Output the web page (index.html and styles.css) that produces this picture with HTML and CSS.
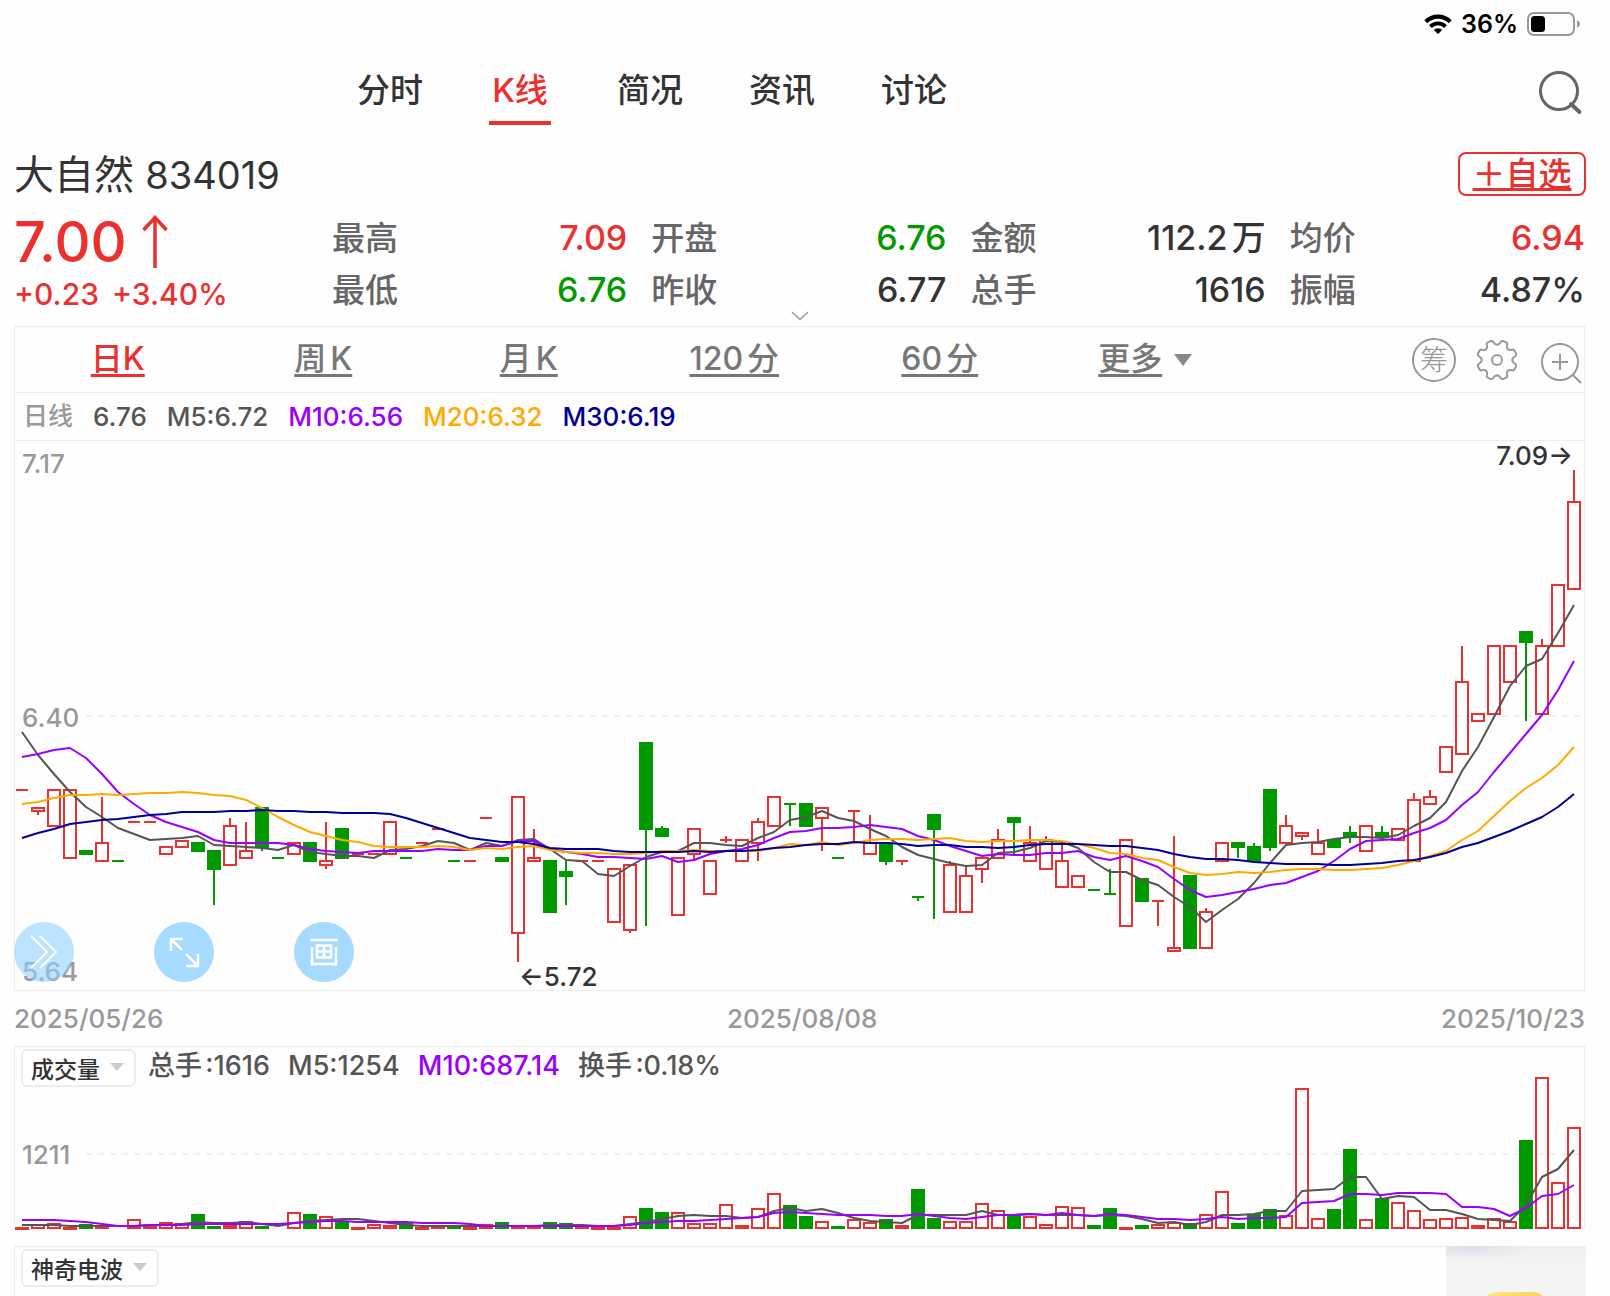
FILE: index.html
```
<!DOCTYPE html>
<html lang="zh-CN">
<head>
    <meta charset="UTF-8">
    <meta name="viewport" content="width=device-width, initial-scale=1.0">
    <title>大自然 834019</title>
    <link rel="stylesheet" href="styles.css">
</head>
<body>
    <div class="status-bar">
        <svg class="wifi" width="28" height="20" viewBox="0 0 28 20" aria-hidden="true">
            <path d="M1.800 7.800 A17 17 0 0 1 26.200 7.800" fill="none" stroke="#000" stroke-width="4.200"/>
            <path d="M6.500 12.600 A10.400 10.400 0 0 1 21.500 12.600" fill="none" stroke="#000" stroke-width="3.800"/>
            <path d="M9.800 16 A6 6 0 0 1 18.200 16 L14 20 Z" fill="#000"/>
        </svg>
        <span>36%</span>
        <svg class="battery" width="54" height="24" viewBox="0 0 54 24" aria-hidden="true">
            <rect x="1" y="1" width="46" height="22" rx="6" fill="none" stroke="#999" stroke-width="2"/>
            <rect x="4" y="4" width="14" height="16" rx="3.500" fill="#000"/>
            <path d="M50 8 Q53 9.500 53 12 Q53 14.500 50 16 Z" fill="#999"/>
        </svg>
    </div>

    <header class="top-nav">
        <nav class="tabs">
            <a href="#">分时</a>
            <a href="#" class="active">K线</a>
            <a href="#">简况</a>
            <a href="#">资讯</a>
            <a href="#">讨论</a>
        </nav>
        <button class="icon-btn search" aria-label="搜索">
            <svg width="46" height="46" viewBox="0 0 46 46">
                <circle cx="21" cy="21" r="18.500" fill="none" stroke="#666" stroke-width="3"/>
                <path d="M33 34 L41.500 42" stroke="#666" stroke-width="4" stroke-linecap="round"/>
            </svg>
        </button>
    </header>

    <div class="title-row">
        <h1>大自然 <span>834019</span></h1>
        <button class="add-btn">＋自选</button>
    </div>

    <section class="quote">
        <div class="price">
            <div class="last">7.00
                <svg width="28" height="54" viewBox="0 0 28 54"><path d="M14 53 V3 M2.500 15 L14 2.500 L25.500 15" fill="none" stroke="#eb3030" stroke-width="3.500"/></svg>
            </div>
            <div class="change"><span>+0.23</span><span>+3.40%</span></div>
        </div>
        <dl class="stats">
            <div><dt>最高</dt><dd class="up">7.09</dd></div>
            <div><dt>开盘</dt><dd class="down">6.76</dd></div>
            <div><dt>金额</dt><dd>112.2万</dd></div>
            <div><dt>均价</dt><dd class="up">6.94</dd></div>
            <div><dt>最低</dt><dd class="down">6.76</dd></div>
            <div><dt>昨收</dt><dd>6.77</dd></div>
            <div><dt>总手</dt><dd>1616</dd></div>
            <div><dt>振幅</dt><dd>4.87%</dd></div>
        </dl>
        <button class="expand" aria-label="展开">
            <svg width="18" height="10" viewBox="0 0 18 10"><path d="M1 1 L9 8.500 L17 1" fill="none" stroke="#999" stroke-width="1.500"/></svg>
        </button>
    </section>

    <section class="panel">
        <div class="toolbar">
            <nav class="periods">
                <a href="#" class="active">日K</a>
                <a href="#">周K</a>
                <a href="#">月K</a>
                <a href="#">120分</a>
                <a href="#">60分</a>
                <a href="#" class="more">更多</a>
            </nav>
            <div class="tools">
                <button class="chip-btn">筹</button>
                <button class="icon-btn" aria-label="设置">
                    <svg width="44" height="44" viewBox="0 0 44 44" fill="none" stroke="#999" stroke-width="2">
                        <path id="gear" stroke-linejoin="round"/>
                        <circle cx="22" cy="22" r="5"/>
                    </svg>
                </button>
                <button class="icon-btn" aria-label="放大">
                    <svg width="44" height="44" viewBox="0 0 44 44" fill="none" stroke="#999" stroke-width="2">
                        <circle cx="22" cy="24" r="18"/>
                        <path d="M14 24 H30 M22 16 V32 M35 37 L43 45"/>
                    </svg>
                </button>
            </div>
        </div>
        <div class="legend">
            <span class="muted">日线</span>
            <span>6.76</span>
            <span>M5:6.72</span>
            <span class="m10">M10:6.56</span>
            <span class="m20">M20:6.32</span>
            <span class="m30">M30:6.19</span>
        </div>
        <div class="chart">
            <svg id="priceChart" viewBox="0 1 1569 549">
                <path class="grid" d="M71 276 H1569"/>
                <text class="axis" x="7" y="33">7.17</text>
                <text class="axis" x="7" y="287">6.40</text>
                <text class="axis" x="7" y="541">5.64</text>
                <text class="mark" x="1558" y="25" text-anchor="end">7.09→</text>
                <text class="mark" x="504" y="546">←5.72</text>
            </svg>
            <div class="float-btns">
                <button class="round first" aria-label="收起">
                    <svg width="60" height="60" viewBox="0 0 60 60"><path d="M17 14 L33 30 L17 46 M26 14 L42 30 L26 46" fill="none" stroke="#fff" stroke-width="2"/></svg>
                </button>
                <button class="round" aria-label="全屏">
                    <svg width="60" height="60" viewBox="0 0 60 60"><path d="M28 28 L17 17 M17 29 V17 H29 M32 32 L44 44 M44 32 V44 H32" fill="none" stroke="#fff" stroke-width="2.500"/></svg>
                </button>
                <button class="round" aria-label="画线">
                    <svg width="60" height="60" viewBox="0 0 60 60" fill="none" stroke="#fff" stroke-width="2.500"><path d="M16 18 H44 M18 25 V44 M42 25 V44 M18 42 H42 M23 23.500 H37 V35.500 H23 Z M30 23 V36 M23 29.500 H37"/></svg>
                </button>
            </div>
        </div>
    </section>

    <div class="dates">
        <span>2025/05/26</span>
        <span>2025/08/08</span>
        <span>2025/10/23</span>
    </div>

    <section class="panel volume">
        <svg id="volumeChart" viewBox="0 0 1569 182">
            <path class="frame" d="M0 181.500 H1569"/>
            <path class="grid" d="M71 107 H1569"/>
            <text class="axis" x="7" y="117">1211</text>
        </svg>
        <div class="legend">
            <label class="picker">
                <select aria-label="指标一"><option>成交量</option></select>
            </label>
            <span>总手:1616</span>
            <span>M5:1254</span>
            <span class="m10">M10:687.14</span>
            <span>换手:0.18%</span>
        </div>
    </section>

    <section class="panel wave">
        <div class="legend">
            <label class="picker">
                <select aria-label="指标二"><option>神奇电波</option></select>
            </label>
        </div>
        <div class="promo"></div>
    </section>

    <script src="chart.js"></script>
</body>
</html>
```
FILE: styles.css
```
* {
    box-sizing: border-box;
}

body {
    margin: 0;
    padding: 0 25px 0 14px;
    min-height: 100vh;
    display: flex;
    flex-direction: column;
    background: #fefefe;
    color: #333;
    font-family: Inter, "Noto Sans CJK SC", sans-serif;
    font-weight: 500;
    text-autospace: normal;
}

a {
    color: inherit;
    text-decoration: none;
}

button {
    padding: 0;
    border: none;
    background: none;
    color: inherit;
    font: inherit;
    cursor: pointer;
}

svg {
    display: block;
}

.up {
    color: #eb3030;
}

.down {
    color: #009900;
}

/* Status bar */
.status-bar {
    display: flex;
    justify-content: flex-end;
    align-items: center;
    gap: 9px;
    height: 48px;
    padding-right: 4px;
    color: #000;
    font-size: 25px;
    font-weight: 600;
}

/* Main tabs */
.top-nav {
    display: flex;
    justify-content: space-between;
    align-items: center;
    height: 88px;
}

.tabs {
    display: flex;
    gap: 66px;
    padding-left: 343px;
    font-size: 33px;
    line-height: 62px;
    text-align: center;
    text-autospace: no-autospace;
}

.tabs a {
    min-width: 62px;
    border-bottom: 4px solid transparent;
}

.tabs .active {
    color: #eb3030;
    border-color: #eb3030;
}

.search {
    margin: 2px 1px 0 0;
}

/* Name and quote */
.title-row {
    display: flex;
    justify-content: space-between;
    align-items: center;
    height: 74px;
    padding: 16px 0 14px;
}

.title-row h1 {
    margin: 0;
    padding-top: 2px;
    font-size: 40px;
    font-weight: 400;
    line-height: 40px;
}

.title-row h1 span {
    font-size: 38px;
}

.add-btn {
    width: 128px;
    height: 44px;
    margin-right: -1px;
    border: 2px solid #eb3030;
    border-radius: 8px;
    color: #eb3030;
    font-size: 33px;
    line-height: 40px;
    text-decoration: underline;
    text-decoration-thickness: 3px;
}

.quote {
    position: relative;
    display: flex;
    height: 116px;
}

.price {
    width: 318px;
    color: #eb3030;
}

.last {
    display: flex;
    align-items: center;
    gap: 14px;
    height: 64px;
    font-size: 56px;
}

.change {
    display: flex;
    gap: 13px;
    font-size: 30px;
    line-height: 40px;
}

.stats {
    flex: 1;
    display: grid;
    grid-template-columns: repeat(4, 1fr);
    column-gap: 24px;
    margin: 0;
    padding-top: 2px;
    font-size: 33px;
    line-height: 52px;
    align-content: start;
}

.stats div {
    display: flex;
    justify-content: space-between;
}

.stats dt {
    color: #666;
}

.stats dd {
    margin: 0;
    font-size: 34px;
}

.expand {
    position: absolute;
    left: 50%;
    bottom: 5px;
    transform: translateX(-50%);
}

/* Panels */
.panel {
    border: 1px solid #ededed;
}

.toolbar {
    display: flex;
    height: 66px;
    border-bottom: 1px solid #ededed;
    color: #777;
}

.periods {
    flex: 1;
    display: grid;
    grid-template-columns: repeat(6, 1fr);
    justify-items: center;
    font-size: 32px;
    line-height: 64px;
}

.periods a {
    text-decoration: underline;
    text-decoration-thickness: 3px;
    text-underline-offset: 4px;
}

.periods .active {
    color: #eb3030;
    text-autospace: no-autospace;
}

.more::after {
    content: "";
    display: inline-block;
    margin-left: 12px;
    border: 9px solid transparent;
    border-top: 12px solid #888;
    border-bottom: none;
    vertical-align: 4px;
}

.tools {
    display: flex;
    align-items: center;
    gap: 19px;
    width: 336px;
    justify-content: flex-end;
    padding-right: 2px;
}

.tools svg {
    overflow: visible;
}

.chip-btn {
    width: 44px;
    height: 44px;
    border: 2px solid #999;
    border-radius: 50%;
    color: #999;
    font-size: 28px;
    font-weight: 300;
    line-height: 38px;
}

.legend {
    display: flex;
    gap: 20px;
    height: 48px;
    padding-left: 8px;
    border-bottom: 1px solid #ededed;
    color: #555;
    font-size: 26px;
    line-height: 47px;
}

.muted {
    color: #999;
    font-size: 25px;
}

.m10 {
    color: #9900ff;
}

.m20 {
    color: #ffaa00;
}

.m30 {
    color: #000099;
}

.chart {
    position: relative;
}

.chart > svg,
.volume > svg {
    width: 100%;
    height: auto;
    overflow: visible;
}

.float-btns {
    position: absolute;
    left: 0;
    bottom: 8px;
    display: flex;
    gap: 80px;
}

.round {
    border-radius: 50%;
    background: rgba(144, 209, 255, 0.8);
}

.round.first {
    margin-left: -1px;
    background: rgba(144, 209, 255, 0.6);
}

.dates {
    display: flex;
    justify-content: space-between;
    color: #999;
    font-size: 26px;
    line-height: 55px;
}

.volume {
    display: grid;
    border-bottom: none;
}

.volume > * {
    grid-area: 1 / 1;
}

.volume .legend,
.wave .legend {
    gap: 18px;
    height: 40px;
    padding-left: 6px;
    border: none;
    font-size: 27px;
    line-height: 38px;
}

.picker {
    position: relative;
    height: 38px;
    margin: 2px -6px 0 0;
}

.picker::after {
    content: "";
    position: absolute;
    right: 12px;
    top: 14px;
    border: 7px solid transparent;
    border-top: 8px solid #ccc;
    border-bottom: none;
    pointer-events: none;
}

.picker select {
    display: block;
    appearance: none;
    height: 38px;
    padding: 0 34px 0 8px;
    border: 2px solid #ededed;
    border-radius: 6px;
    background: #fff;
    color: #333;
    font: inherit;
    font-size: 23px;
}

.wave {
    flex: 1;
    display: flex;
    justify-content: space-between;
    min-height: 50px;
    margin-top: 17px;
    border-bottom: none;
}

.promo {
    display: flex;
    justify-content: center;
    align-items: flex-end;
    width: 140px;
    margin: -1px -2px 0 0;
    background:
        radial-gradient(ellipse 60px 14px at 26px 0, #dedeea, transparent),
        linear-gradient(#efefef, #f4f4f4 20px);
}

.promo::after {
    content: "";
    width: 54px;
    height: 4px;
    margin-right: 2px;
    border-radius: 12px 12px 0 0 / 4px 4px 0 0;
    background: linear-gradient(90deg, #ffe680, #ffd060);
}

/* Chart drawing */
.axis {
    fill: #999;
    font-size: 26px;
}

.mark {
    fill: #333;
    font-size: 26px;
}

.grid,
.frame {
    fill: none;
    stroke: #f0f0f0;
}

.grid {
    stroke-width: 2;
    stroke-dasharray: 6 6;
}

.rise {
    fill: none;
    stroke: #eb3030;
    stroke-width: 2;
}

.fall {
    fill: #009900;
    stroke: #009900;
    stroke-width: 2;
}

.line {
    fill: none;
    stroke-width: 2;
    stroke-linejoin: round;
}
```
FILE: chart.js
```
// [direction, body top, body bottom, high, low]
const candles = [
    ['r',350,350], ['r',367,372,367,375], ['r',349,387], ['r',349,419], ['g',410,415],
    ['r',402,422,357,422], ['g',421,421], ['r',382,382], ['r',382,382], ['r',406,415],
    ['r',400,408], ['g',402,412], ['g',410,430,410,465], ['r',385,426,378,426], ['r',410,419,382,419],
    ['g',367,408,367,411], ['g',418,418], ['r',402,415], ['g',402,422], ['r',420,426,382,429],
    ['g',388,419], ['r',414,414], ['r',414,414], ['r',381,415], ['g',418,418],
    ['r',403,403], ['r',389,389], ['g',421,421], ['r',421,421], ['r',378,378],
    ['g',417,422], ['r',356,494,356,522], ['r',417,422,389,422], ['g',420,473], ['g',431,437,421,465],
    ['r',421,421], ['r',421,421], ['r',428,483], ['r',424,491,424,493], ['g',302,390,302,486],
    ['g',388,397,386,397], ['r',417,476], ['r',388,415,388,420], ['r',420,455], ['r',400,400,396,403],
    ['r',399,422], ['r',381,404,378,421], ['r',356,387], ['g',364,364,364,386], ['g',363,387],
    ['r',367,379,367,411], ['g',418,418], ['r',371,371,371,403], ['r',402,415,375,415], ['g',402,422,402,425],
    ['r',421,421,421,425], ['g',457,457,457,461], ['g',374,390,374,479], ['r',424,473,421,473], ['r',435,473,426,473],
    ['r',417,430,417,443], ['r',399,419,389,419], ['g',377,383,377,414], ['r',402,422,386,422], ['r',399,430,396,430],
    ['r',420,448,403,448], ['r',435,448], ['g',450,450], ['g',454,454,429,454], ['r',399,487],
    ['g',438,462], ['r',461,461,461,486], ['r',507,512,396,512], ['g',435,509], ['r',471,509,468,509],
    ['r',402,422], ['g',402,408,402,418], ['g',406,422,403,422], ['g',349,408,349,411], ['r',385,404,375,404],
    ['r',392,397,392,400], ['r',402,415,389,415], ['g',399,408], ['g',392,398,386,403], ['r',385,412],
    ['g',392,398,386,398], ['r',388,401], ['r',359,422,353,422], ['r',356,365,350,365], ['r',306,333],
    ['r',241,315,206,315], ['r',273,282], ['r',205,275], ['r',205,243], ['g',191,203,191,281],
    ['r',205,275,199,275], ['r',144,207], ['r',61,150,30,150]
];

const priceLines = {
    '#555555': [292,315,334,352,367,377,388,394,400,399,398,396,405,406,407,408,410,405,412,414,416,416,418,410,409,406,401,403,410,403,406,400,399,409,420,421,434,436,426,417,412,411,403,403,405,406,398,392,380,377,371,378,381,389,396,407,415,419,423,426,425,413,412,408,401,402,408,422,432,432,440,445,457,467,482,470,459,443,423,405,403,402,399,397,397,398,395,386,378,362,331,307,277,246,226,219,193,165],
    '#9900ff': [317,314,310,308,318,334,352,364,375,382,387,392,400,403,403,403,403,405,409,411,412,413,411,411,411,411,409,410,410,406,406,401,401,409,412,414,417,417,418,419,416,422,420,414,411,409,405,398,392,391,388,388,387,385,387,389,396,400,406,411,416,414,415,415,413,413,411,417,420,416,421,427,439,450,457,455,452,449,445,443,437,431,421,409,401,400,399,393,388,380,365,352,332,313,294,275,250,221],
    '#ffaa00': [364,362,358,355,355,354,355,354,353,353,352,353,355,356,360,368,377,385,392,396,400,402,406,407,407,407,406,407,410,408,409,407,406,410,412,413,413,414,414,413,411,411,410,411,411,411,411,408,404,405,402,405,403,400,399,399,400,399,398,401,402,401,401,400,400,401,404,408,413,414,418,420,427,433,435,434,432,433,432,430,429,429,430,430,429,428,425,421,416,411,400,391,376,361,348,338,325,307],
    '#000099': [398,393,389,384,382,380,379,377,375,374,372,372,372,371,371,370,371,371,372,372,373,373,373,374,378,383,388,393,398,400,402,402,404,408,409,409,409,411,412,412,412,412,411,412,411,411,410,408,407,405,404,404,402,403,403,404,406,405,405,407,407,408,407,405,404,404,404,405,406,406,408,410,414,417,419,419,420,422,423,424,424,424,425,425,424,423,421,420,417,413,407,403,397,391,384,377,367,354]
};

// bar heights above the base line
const volumes = [2,5,6,2,5,3,0,10,4,7,6,15,3,4,8,3,0,17,15,13,8,2,5,4,6,2,3,3,2,5,7,3,3,7,6,3,2,2,13,21,17,17,6,6,25,4,21,36,24,13,8,3,10,7,10,4,40,11,8,8,26,19,14,13,5,23,22,4,21,2,4,5,7,6,15,38,6,15,20,14,141,11,20,80,10,31,27,19,10,11,12,4,11,8,89,152,47,102];

const volumeLines = {
    '#555555': [4,4,4,3,3,3,3,3,4,4,5,7,6,6,7,5,3,6,8,9,10,10,8,6,4,3,3,3,3,3,3,3,3,4,4,4,3,3,5,7,10,13,14,13,13,11,12,18,21,18,20,16,11,8,7,6,14,14,14,14,18,14,14,15,14,14,14,13,14,13,10,6,7,4,7,14,14,15,18,18,38,39,40,52,52,30,33,32,19,19,15,10,9,8,24,52,60,79],
    '#9900ff': [9,9,9,8,7,5,3,3,4,4,4,5,5,5,5,5,5,6,7,8,8,7,7,7,7,6,6,6,5,3,3,3,3,3,3,3,3,3,4,6,7,8,8,9,10,11,12,16,17,16,15,14,14,14,13,13,15,13,11,10,12,14,14,15,14,16,14,13,15,14,12,10,10,9,10,12,10,11,11,12,26,27,28,35,35,34,36,36,36,35,22,22,20,13,21,33,35,44]
};

const STEP = 16;
const FIRST = 7;
const BASE = 182;

function add(svg, name, attrs) {
    const el = document.createElementNS('http://www.w3.org/2000/svg', name);
    for (const key in attrs) el.setAttribute(key, attrs[key]);
    svg.appendChild(el);
}

function drawBody(svg, x, top, bottom, cls) {
    add(svg, 'rect', { x: x - 6, y: top + 1, width: 12, height: Math.max(bottom - top - 2, 1), class: cls });
}

function drawLine(svg, points, color) {
    const d = points.map((y, i) => (i ? 'L' : 'M') + (FIRST + i * STEP) + ' ' + y).join(' ');
    add(svg, 'path', { d: d, class: 'line', stroke: color });
}

const price = document.getElementById('priceChart');
candles.forEach(([dir, top, bottom, high, low], i) => {
    const x = FIRST + i * STEP;
    const cls = dir === 'r' ? 'rise' : 'fall';
    if (top === bottom) {
        add(price, 'path', { d: `M${x - 6} ${top} h12`, class: cls });
    } else {
        drawBody(price, x, top, bottom, cls);
    }
    if (high < top) add(price, 'path', { d: `M${x} ${high} V${top}`, class: cls });
    if (low > bottom) add(price, 'path', { d: `M${x} ${bottom} V${low}`, class: cls });
});
for (const color in priceLines) drawLine(price, priceLines[color], color);

const volume = document.getElementById('volumeChart');
volumes.forEach((h, i) => {
    const cls = candles[i][0] === 'r' ? 'rise' : 'fall';
    if (h) drawBody(volume, FIRST + i * STEP, BASE - h, BASE, cls);
});
for (const color in volumeLines) drawLine(volume, volumeLines[color].map(h => BASE - h), color);

// eight-toothed gear outline
let gear = '';
for (let i = 0; i < 8; i++) {
    [[-13, 17], [-10, 19.3], [-5, 20], [5, 20], [10, 19.3], [13, 17], [17, 15.8], [22.5, 15.3], [28, 15.8]].forEach(([deg, r], j) => {
        const a = (i * 45 + 22.5 + deg) * Math.PI / 180;
        gear += (i || j ? 'L' : 'M') + (22 + r * Math.sin(a)).toFixed(1) + ' ' + (22 - r * Math.cos(a)).toFixed(1);
    });
}
document.getElementById('gear').setAttribute('d', gear + 'Z');
```
